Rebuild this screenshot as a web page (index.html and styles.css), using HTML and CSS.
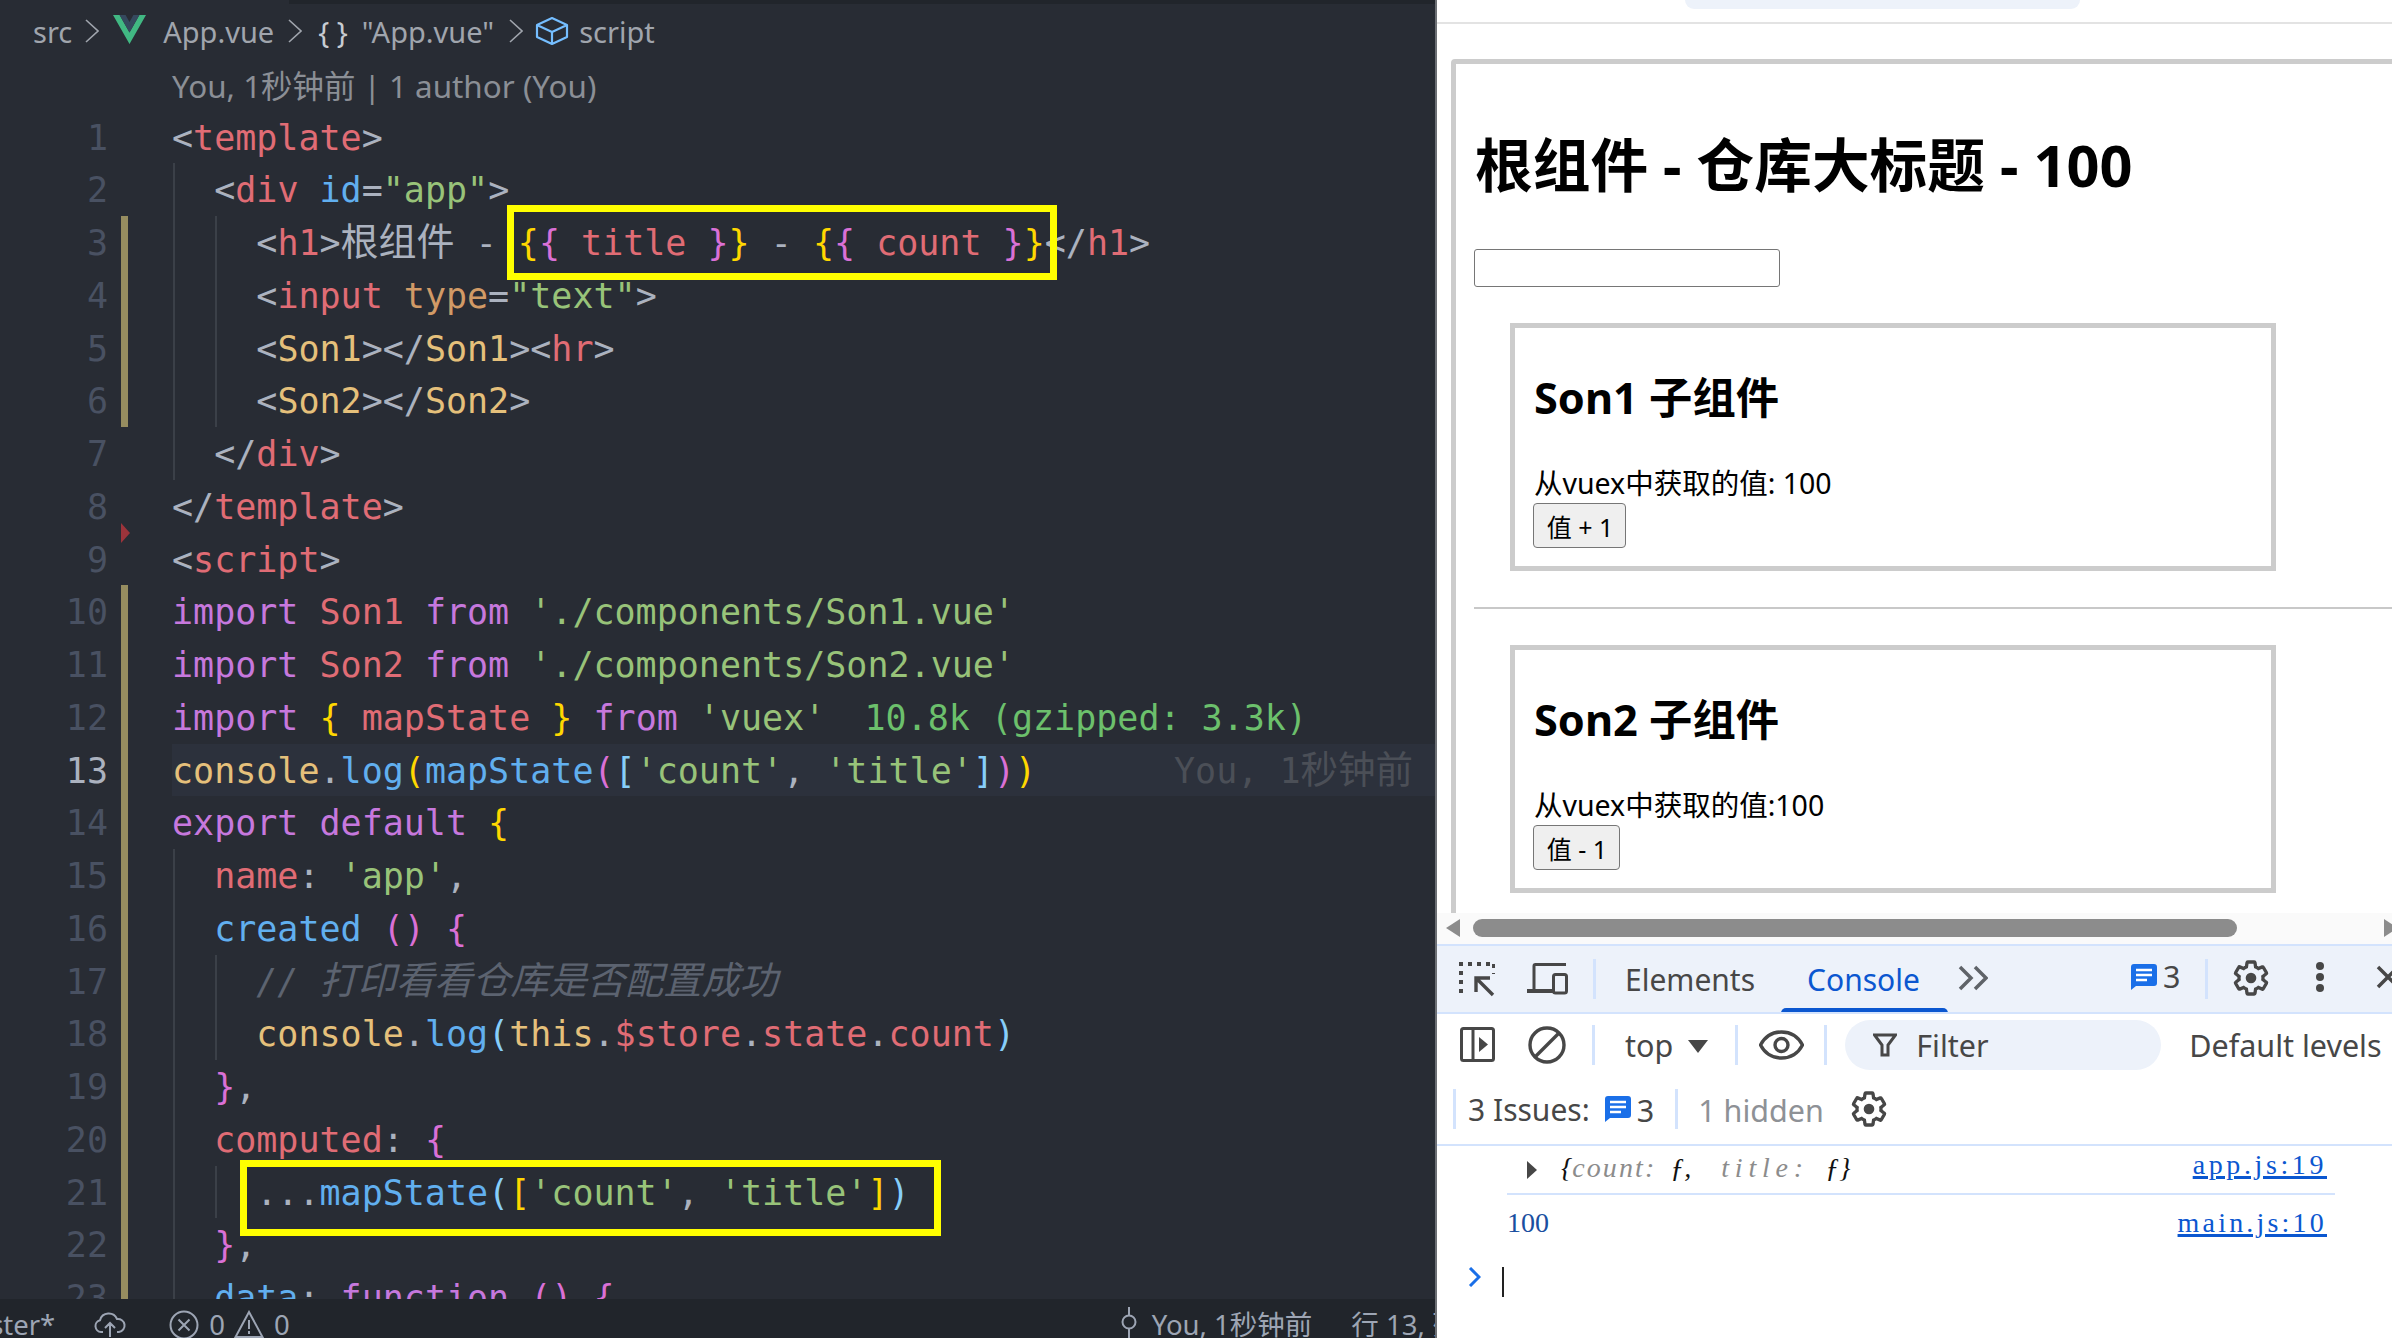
FILE: index.html
```html
<!DOCTYPE html>
<html lang="zh">
<head>
<meta charset="utf-8">
<title>App.vue</title>
<link rel="stylesheet" href="styles.css">
</head>
<body>
<svg class="defs" width="0" height="0" aria-hidden="true">
  <symbol id="gear" viewBox="0 0 24 24"><path fill="none" stroke="currentColor" stroke-width="2" d="M19.14 12.94c.04-.3.06-.61.06-.94 0-.32-.02-.64-.07-.94l2.03-1.58c.18-.14.23-.41.12-.61l-1.92-3.32c-.12-.22-.37-.29-.59-.22l-2.39.96c-.5-.38-1.03-.7-1.62-.94l-.36-2.54c-.04-.24-.24-.41-.48-.41h-3.84c-.24 0-.43.17-.47.41l-.36 2.54c-.59.24-1.13.57-1.62.94l-2.39-.96c-.22-.08-.47 0-.59.22L2.74 8.87c-.12.21-.08.47.12.61l2.03 1.58c-.05.3-.09.63-.09.94s.02.64.07.94l-2.03 1.58c-.18.14-.23.41-.12.61l1.92 3.32c.12.22.37.29.59.22l2.39-.96c.5.38 1.03.7 1.62.94l.36 2.54c.05.24.24.41.48.41h3.84c.24 0 .44-.17.47-.41l.36-2.54c.59-.24 1.13-.56 1.62-.94l2.39.96c.22.08.47 0 .59-.22l1.92-3.32c.12-.22.07-.47-.12-.61l-2.01-1.58z"/><circle cx="12" cy="12" r="3.2" fill="currentColor"/></symbol>
  <symbol id="chat" viewBox="0 0 26 26"><path fill="#1a6fe8" d="M3 0h20a3 3 0 0 1 3 3v16a3 3 0 0 1-3 3H5l-5 4V3a3 3 0 0 1 3-3z"/><path stroke="#fff" stroke-width="2.4" d="M5 6h16M5 11h16M5 16h11"/></symbol>
</svg>
<div class="app">
  <section class="editor">
    <div class="tab-edge"></div>
    <nav class="crumbs">
      <span class="c-src">src</span>
      <svg class="chev" width="14" height="28" viewBox="0 0 14 28"><path d="M1 3l12 11L1 25" fill="none" stroke="currentColor" stroke-width="1.6"/></svg>
      <svg class="vue" width="33" height="29" viewBox="0 0 33 29"><path fill="#41b883" d="M0 0h6.6l9.9 17.5L26.400 0H33L16.500 29z"/><path fill="#35495e" d="M6.600 0h6l3.900 7 3.900-7h6l-9.900 17.500z"/></svg>
      <span class="c-file">App.vue</span>
      <svg class="chev" width="14" height="28" viewBox="0 0 14 28"><path d="M1 3l12 11L1 25" fill="none" stroke="currentColor" stroke-width="1.6"/></svg>
      <span class="c-obj">{ }</span>
      <span class="c-quoted">"App.vue"</span>
      <svg class="chev" width="14" height="28" viewBox="0 0 14 28"><path d="M1 3l12 11L1 25" fill="none" stroke="currentColor" stroke-width="1.6"/></svg>
      <svg class="cube" width="34" height="30" viewBox="0 0 34 30"><path d="M17 2L32 9v12L17 28 2 21V9zM2 9l15 7 15-7M17 16v12" fill="none" stroke="#75beff" stroke-width="2.2" stroke-linejoin="round"/></svg>
      <span class="c-script">script</span>
    </nav>
    <div class="lens">You, 1秒钟前 | 1 author (You)</div>
    <div class="code">
      <div class="line"><span class="ln">1</span><span class="mark"></span><span class="txt"><span class="pn">&lt;</span><span class="tg">template</span><span class="pn">&gt;</span></span></div>
      <div class="line"><span class="ln">2</span><span class="mark"></span><span class="txt g1">  <span class="pn">&lt;</span><span class="tg">div</span> <span class="fn">id</span><span class="pn">=</span><span class="st">"app"</span><span class="pn">&gt;</span></span></div>
      <div class="line"><span class="ln">3</span><span class="mark mod"></span><span class="txt g1 g2">    <span class="pn">&lt;</span><span class="tg">h1</span><span class="pn">&gt;<span class="cjk">根组件</span> - </span><span class="y">{</span><span class="p">{</span> <span class="tg">title</span> <span class="p">}</span><span class="y">}</span><span class="pn"> - </span><span class="y">{</span><span class="p">{</span> <span class="tg">count</span> <span class="p">}</span><span class="y">}</span><span class="pn">&lt;/</span><span class="tg">h1</span><span class="pn">&gt;</span></span></div>
      <div class="line"><span class="ln">4</span><span class="mark mod"></span><span class="txt g1 g2">    <span class="pn">&lt;</span><span class="tg">input</span> <span class="at">type</span><span class="pn">=</span><span class="st">"text"</span><span class="pn">&gt;</span></span></div>
      <div class="line"><span class="ln">5</span><span class="mark mod"></span><span class="txt g1 g2">    <span class="pn">&lt;</span><span class="cp">Son1</span><span class="pn">&gt;&lt;/</span><span class="cp">Son1</span><span class="pn">&gt;&lt;</span><span class="tg">hr</span><span class="pn">&gt;</span></span></div>
      <div class="line"><span class="ln">6</span><span class="mark mod"></span><span class="txt g1 g2">    <span class="pn">&lt;</span><span class="cp">Son2</span><span class="pn">&gt;&lt;/</span><span class="cp">Son2</span><span class="pn">&gt;</span></span></div>
      <div class="line"><span class="ln">7</span><span class="mark"></span><span class="txt g1">  <span class="pn">&lt;/</span><span class="tg">div</span><span class="pn">&gt;</span></span></div>
      <div class="line"><span class="ln">8</span><span class="mark"></span><span class="txt"><span class="pn">&lt;/</span><span class="tg">template</span><span class="pn">&gt;</span></span></div>
      <div class="line"><span class="ln">9</span><span class="mark"><i class="del"></i></span><span class="txt"><span class="pn">&lt;</span><span class="tg">script</span><span class="pn">&gt;</span></span></div>
      <div class="line"><span class="ln">10</span><span class="mark mod"></span><span class="txt"><span class="kw">import</span> <span class="tg">Son1</span> <span class="kw">from</span> <span class="st">'./components/Son1.vue'</span></span></div>
      <div class="line"><span class="ln">11</span><span class="mark mod"></span><span class="txt"><span class="kw">import</span> <span class="tg">Son2</span> <span class="kw">from</span> <span class="st">'./components/Son2.vue'</span></span></div>
      <div class="line"><span class="ln">12</span><span class="mark mod"></span><span class="txt"><span class="kw">import</span> <span class="y">{</span> <span class="tg">mapState</span> <span class="y">}</span> <span class="kw">from</span> <span class="st">'vuex'</span>  <span class="sz">10.8k (gzipped: 3.3k)</span></span></div>
      <div class="line"><span class="ln cur">13</span><span class="mark mod"></span><span class="txt hl"><span class="cp">console</span><span class="pn">.</span><span class="fn">log</span><span class="y">(</span><span class="fn">mapState</span><span class="p">(</span><span class="l">[</span><span class="st">'count'</span><span class="pn">, </span><span class="st">'title'</span><span class="l">]</span><span class="p">)</span><span class="y">)</span><span class="gh">You, 1<span class="cjk-g">秒钟前</span></span></span></div>
      <div class="line"><span class="ln">14</span><span class="mark mod"></span><span class="txt"><span class="kw">export</span> <span class="kw">default</span> <span class="y">{</span></span></div>
      <div class="line"><span class="ln">15</span><span class="mark mod"></span><span class="txt g1">  <span class="tg">name</span><span class="pn">: </span><span class="st">'app'</span><span class="pn">,</span></span></div>
      <div class="line"><span class="ln">16</span><span class="mark mod"></span><span class="txt g1">  <span class="fn">created</span> <span class="p">()</span> <span class="p">{</span></span></div>
      <div class="line"><span class="ln">17</span><span class="mark mod"></span><span class="txt g1 g2">    <span class="cm">// <span class="cjk-c">打印看看仓库是否配置成功</span></span></span></div>
      <div class="line"><span class="ln">18</span><span class="mark mod"></span><span class="txt g1 g2">    <span class="cp">console</span><span class="pn">.</span><span class="fn">log</span><span class="l">(</span><span class="cp">this</span><span class="pn">.</span><span class="tg">$store</span><span class="pn">.</span><span class="tg">state</span><span class="pn">.</span><span class="tg">count</span><span class="l">)</span></span></div>
      <div class="line"><span class="ln">19</span><span class="mark mod"></span><span class="txt g1">  <span class="p">}</span><span class="pn">,</span></span></div>
      <div class="line"><span class="ln">20</span><span class="mark mod"></span><span class="txt g1">  <span class="tg">computed</span><span class="pn">: </span><span class="p">{</span></span></div>
      <div class="line"><span class="ln">21</span><span class="mark mod"></span><span class="txt g1 g2">    <span class="pn">...</span><span class="fn">mapState</span><span class="l">(</span><span class="y">[</span><span class="st">'count'</span><span class="pn">, </span><span class="st">'title'</span><span class="y">]</span><span class="l">)</span></span></div>
      <div class="line"><span class="ln">22</span><span class="mark mod"></span><span class="txt g1">  <span class="p">}</span><span class="pn">,</span></span></div>
      <div class="line"><span class="ln">23</span><span class="mark mod"></span><span class="txt g1">  <span class="fn">data</span><span class="pn">: </span><span class="kw">function</span> <span class="p">()</span> <span class="p">{</span></span></div>
    </div>
    <footer class="status">
      <span class="s-branch">master*</span>
      <svg class="s-cloud" width="32" height="26" viewBox="0 0 32 26"><path d="M9 20H7a6 6 0 0 1-1-11.800A9 9 0 0 1 23 7a6.500 6.500 0 0 1 2 13h-2M16 25V12M11 16l5-5 5 5" fill="none" stroke="currentColor" stroke-width="2"/></svg>
      <svg class="s-err" width="30" height="30" viewBox="0 0 30 30"><circle cx="15" cy="15" r="13.500" fill="none" stroke="currentColor" stroke-width="2"/><path d="M9.500 9.500l11 11M20.500 9.500l-11 11" stroke="currentColor" stroke-width="2"/></svg>
      <span class="s-num">0</span>
      <svg class="s-warn" width="30" height="28" viewBox="0 0 30 28"><path d="M15 2L28.500 27h-27zM15 10v9M15 21v3" fill="none" stroke="currentColor" stroke-width="2"/></svg>
      <span class="s-num">0</span>
      <svg class="s-commit" width="18" height="34" viewBox="0 0 18 34"><circle cx="9" cy="15" r="6.500" fill="none" stroke="currentColor" stroke-width="2"/><path d="M9 0v8M9 22v12" stroke="currentColor" stroke-width="2"/></svg>
      <span class="s-blame">You, 1秒钟前</span>
      <span class="s-pos">行 13, 列 1</span>
    </footer>
    <div class="hilite hilite-a"></div>
    <div class="hilite hilite-b"></div>
  </section>

  <section class="browser">
    <div class="viewport">
      <div class="address"><div class="address-pill"></div></div>
      <div class="root-box">
        <h1 class="root-title">根组件 - 仓库大标题 - 100</h1>
        <input class="root-input" type="text">
        <div class="son">
          <h3 class="son-title">Son1 子组件</h3>
          <div class="son-text">从vuex中获取的值: 100</div>
          <button class="son-btn son-btn-add">值 + 1</button>
        </div>
        <hr class="root-rule">
        <div class="son">
          <h3 class="son-title">Son2 子组件</h3>
          <div class="son-text">从vuex中获取的值:100</div>
          <button class="son-btn son-btn-sub">值 - 1</button>
        </div>
      </div>
    </div>
    <div class="hscroll">
      <i class="arrow-l"></i>
      <i class="thumb"></i>
      <i class="arrow-r"></i>
    </div>
    <div class="devtools">
      <div class="dt-tabs">
        <svg class="ic-inspect" width="36" height="36" viewBox="0 0 36 36"><path d="M2 32V3h33M35 3v10" fill="none" stroke="#474747" stroke-width="4" stroke-dasharray="4 5"/><path d="M17 31V17h14M17 17l17 17" fill="none" stroke="#474747" stroke-width="3.400"/></svg>
        <svg class="ic-device" width="41" height="32" viewBox="0 0 41 32"><path d="M7 28V3a1.500 1.500 0 0 1 1.500-1.500H39" fill="none" stroke="#474747" stroke-width="3"/><path d="M0 26h26v4H0z" fill="#474747"/><rect x="26.500" y="11.500" width="13" height="18.500" rx="2" fill="#edf2fa" stroke="#474747" stroke-width="3"/></svg>
        <i class="dt-sep sep-a"></i>
        <span class="tab tab-el">Elements</span>
        <span class="tab tab-con">Console</span>
        <svg class="ic-more" width="30" height="26" viewBox="0 0 30 26"><path d="M2 2l11 11L2 24M17 2l11 11-11 11" fill="none" stroke="#5f6368" stroke-width="3.500"/></svg>
        <svg class="ic-chat" width="26" height="26"><use href="#chat"/></svg>
        <span class="count">3</span>
        <i class="dt-sep sep-b"></i>
        <svg class="ic-gear" width="40" height="40"><use href="#gear"/></svg>
        <svg class="ic-dots" width="8" height="30" viewBox="0 0 8 30"><circle cx="4" cy="4" r="4" fill="#474747"/><circle cx="4" cy="15" r="4" fill="#474747"/><circle cx="4" cy="26" r="4" fill="#474747"/></svg>
        <svg class="ic-close" width="24" height="24" viewBox="0 0 24 24"><path d="M2 2l20 20M22 2L2 22" stroke="#474747" stroke-width="3.500"/></svg>
      </div>
      <div class="dt-bar">
        <svg class="ic-side" width="35" height="35" viewBox="0 0 35 35"><rect x="1.500" y="1.500" width="32" height="32" rx="2" fill="none" stroke="#474747" stroke-width="3"/><path d="M13 2v31" stroke="#474747" stroke-width="3"/><path d="M19 10l9 7.500-9 7.500z" fill="#474747"/></svg>
        <svg class="ic-block" width="38" height="38" viewBox="0 0 38 38"><circle cx="19" cy="19" r="17" fill="none" stroke="#474747" stroke-width="3.400"/><path d="M7 31L31 7" stroke="#474747" stroke-width="3.400"/></svg>
        <i class="dt-sep sep-c"></i>
        <span class="bar-text top-text">top</span>
        <i class="tri-down"></i>
        <i class="dt-sep sep-d"></i>
        <svg class="ic-eye" width="45" height="30" viewBox="0 0 45 30"><path d="M1.500 15C6 6.500 14 2 22.500 2S39 6.500 43.500 15C39 23.500 31 28 22.500 28S6 23.500 1.500 15z" fill="none" stroke="#474747" stroke-width="3.400"/><circle cx="22.500" cy="15" r="6.500" fill="none" stroke="#474747" stroke-width="3.400"/></svg>
        <i class="dt-sep sep-e"></i>
        <div class="filter">
          <svg class="ic-funnel" width="24" height="24" viewBox="0 0 24 24"><path d="M1.500 2h21L15 12v10H9V12z" fill="none" stroke="#474747" stroke-width="3"/></svg>
          <span class="bar-text">Filter</span>
        </div>
        <span class="bar-text levels">Default levels</span>
      </div>
      <div class="dt-issues">
        <i class="dt-sep sep-f"></i>
        <span class="bar-text issues-text">3 Issues:</span>
        <svg class="ic-chat-2" width="26" height="26"><use href="#chat"/></svg>
        <span class="count">3</span>
        <i class="dt-sep sep-g"></i>
        <span class="hidden-text">1 hidden</span>
        <svg class="ic-gear-2" width="40" height="40"><use href="#gear"/></svg>
      </div>
      <div class="log log-obj">
        <i class="tri-right"></i>
        <span class="obj">{<span class="k k-count">count</span><span class="k k-colon">:</span> ƒ, <span class="k k-title">title</span><span class="k k-colon">:</span> ƒ}</span>
        <a class="src-link link-app">app.js:19</a>
      </div>
      <div class="log log-num">
        <span class="num">100</span>
        <a class="src-link link-main">main.js:10</a>
      </div>
      <div class="prompt">
        <svg class="ic-prompt" width="13" height="20" viewBox="0 0 13 20"><path d="M2 1l9 9-9 9" fill="none" stroke="#1a6fe8" stroke-width="3"/></svg>
        <i class="caret"></i>
      </div>
    </div>
  </section>
</div>
</body>
</html>
```
FILE: styles.css
```css
* { box-sizing: border-box; }
html, body { margin: 0; height: 100%; overflow: hidden; background: #fff; }
.defs { position: absolute; }
i { display: block; flex: none; }
svg { display: block; flex: none; }

.app { display: flex; width: 2392px; height: 1338px; overflow: hidden; }

/* Editor */
.editor {
  position: relative;
  width: 1437px;
  flex: none;
  display: flex;
  flex-direction: column;
  background: #282c34;
  border-right: 2px solid #6d7075;
  overflow: hidden;
  font-family: "Noto Sans", "Noto Sans CJK SC", sans-serif;
}
.tab-edge { height: 4px; margin-left: 289px; background: #21252b; flex: none; }
.crumbs {
  display: flex;
  align-items: center;
  height: 54px;
  flex: none;
  padding-left: 33px;
  font-size: 29px;
  color: #a0a5ad;
}
.chev { color: #a0a5ad; }
.c-src + .chev { margin-left: 13px; }
.vue { margin-left: 14px; margin-top: -3px; }
.c-file { margin-left: 17px; margin-right: 14px; }
.c-obj { margin-left: 16px; white-space: pre; color: #c8ccd2; }
.c-quoted { margin-left: 14px; margin-right: 15px; }
.cube { margin-left: 12px; }
.c-script { margin-left: 10px; }

.lens {
  height: 52.5px;
  flex: none;
  padding-left: 172px;
  line-height: 56px;
  font-size: 31.400px;
  color: #8b8f96;
  white-space: pre;
}

.code {
  flex: 1;
  min-height: 0;
  overflow: hidden;
  font-family: "DejaVu Sans Mono", "Noto Sans CJK SC", monospace;
  font-size: 35px;
  color: #abb2bf;
}
.line { display: flex; height: 52.75px; line-height: 55px; }
.ln { width: 108px; flex: none; text-align: right; color: #495162; }
.ln.cur { color: #abb2bf; }
.mark { position: relative; width: 7px; flex: none; margin-left: 13px; }
.mark.mod { background: #968d60; }
.del {
  position: absolute;
  left: 0;
  top: -10px;
  border-left: 9px solid #9c343b;
  border-top: 10px solid transparent;
  border-bottom: 10px solid transparent;
}
.txt {
  flex: 1;
  min-width: 0;
  margin-left: 44px;
  white-space: pre;
  overflow: visible;
}
.txt.g1 { background: linear-gradient(#3b4048, #3b4048) 1px 0 / 2px 100% no-repeat; }
.txt.g1.g2 {
  background:
    linear-gradient(#3b4048, #3b4048) 1px 0 / 2px 100% no-repeat,
    linear-gradient(#3b4048, #3b4048) 43px 0 / 2px 100% no-repeat;
}
.txt.hl { background: #2c313c; }
.cjk { font-size: 38px; line-height: 1; }
.cjk-g { font-size: 37.500px; line-height: 1; }
.cjk-c { font-size: 38.200px; line-height: 1; }
.tg { color: #e06c75; }
.pn { color: #abb2bf; }
.st { color: #98c379; }
.at { color: #d19a66; }
.kw { color: #c678dd; }
.fn { color: #61afef; }
.cp { color: #e5c07b; }
.y { color: #ffd700; }
.p { color: #da70d6; }
.l { color: #87cefa; }
.sz { color: #6cc06c; margin-left: -3px; }
.cm { color: #5c6370; font-style: italic; }
.gh { color: #4b4f57; margin-left: 138px; }

.status {
  height: 39px;
  flex: none;
  display: flex;
  align-items: flex-start;
  background: #21252b;
  color: #9da5b4;
  font-size: 27.500px;
  line-height: 36px;
  white-space: nowrap;
  overflow: hidden;
  padding-top: 8px;
}
.s-branch { margin-left: -51px; }
.s-cloud { margin-left: 39px; margin-top: 5px; }
.s-err { margin-left: 43px; margin-top: 3px; }
.s-num { margin-left: 10px; }
.s-warn { margin-left: 9px; margin-top: 3px; }
.s-commit { margin-left: 830px; }
.s-blame { margin-left: 14px; }
.s-pos { margin-left: 39px; }

.hilite { position: absolute; border: 7px solid #ffff00; }
.hilite-a { left: 507px; top: 205px; width: 550px; height: 75px; }
.hilite-b { left: 240px; top: 1160px; width: 701px; height: 76px; }

/* Browser */
.browser {
  flex: 1;
  min-width: 0;
  display: flex;
  flex-direction: column;
  font-family: "Noto Sans", "Noto Sans CJK SC", sans-serif;
  color: #474747;
}
.viewport { height: 913px; flex: none; overflow: hidden; background: #fff; }
.address { height: 24px; border-bottom: 2px solid #e3e3e3; padding-left: 248px; }
.address-pill { width: 395px; height: 9px; background: #edf2fa; border-radius: 0 0 14px 14px; }
.root-box {
  width: 1200px;
  margin: 35px 0 0 14px;
  border: 5px solid #ccc;
  border-radius: 4px;
  padding: 0 0 40px 18px;
  color: #000;
}
.root-title { margin: 61px 0 0 1px; font-size: 57.700px; line-height: 80px; font-weight: 700; }
.root-input {
  display: block;
  width: 306px;
  height: 38px;
  margin-top: 44px;
  border: 1.5px solid #767676;
  border-radius: 3px;
  background: #fff;
}
.son {
  width: 766px;
  margin: 36px 0 0 36px;
  border: 5px solid #ccc;
  padding: 40px 0 18px 18px;
}
.son-title { margin: 0 0 0 1px; font-size: 43.300px; line-height: 60px; font-weight: 700; }
.son-text { margin: 36px 0 0 1px; font-size: 28.500px; line-height: 39px; }
.son-btn {
  display: block;
  height: 45px;
  padding: 0 0 0 1px;
  border: 1.5px solid #767676;
  border-radius: 4px;
  background: #efefef;
  color: #000;
  font-family: "Noto Sans", "Noto Sans CJK SC", sans-serif;
  font-size: 25px;
}
.son-btn-add { width: 93px; }
.son-btn-sub { width: 87px; }
.root-rule { height: 2px; margin: 36px 0 0; border: 0; background: #c8c8c8; }

.hscroll {
  height: 31px;
  flex: none;
  display: flex;
  align-items: flex-start;
  padding-top: 6px;
  background: #fafafa;
}
.arrow-l {
  margin: 0 0 0 9px;
  border-right: 14px solid #8c8c8c;
  border-top: 9px solid transparent;
  border-bottom: 9px solid transparent;
}
.thumb { width: 764px; height: 18px; margin-left: 13px; background: #8c8c8c; border-radius: 9px; }
.arrow-r {
  margin-left: 147px;
  border-left: 14px solid #8c8c8c;
  border-top: 9px solid transparent;
  border-bottom: 9px solid transparent;
}

.devtools { flex: 1; min-height: 0; background: #fff; overflow: hidden; font-size: 30.500px; }
.dt-tabs {
  height: 70px;
  display: flex;
  align-items: center;
  background: #edf2fa;
  border-top: 2px solid #d3e3fd;
  border-bottom: 2px solid #d3e3fd;
  overflow: hidden;
}
.dt-sep { width: 3px; height: 40px; background: #d3e3fd; }
.ic-inspect { margin-left: 22px; }
.ic-device { margin-left: 32px; }
.sep-a { margin-left: 25px; }
.tab { line-height: 66px; padding-top: 2px; font-size: 30px; }
.tab-el { margin-left: 29px; }
.tab-con {
  position: relative;
  margin-left: 52px;
  color: #0b57d0;
}
.tab-con::after {
  content: "";
  position: absolute;
  left: -26px;
  right: -28px;
  bottom: 0;
  height: 5px;
  background: #0b57d0;
  border-radius: 5px 5px 0 0;
}
.ic-more { margin-left: 38px; margin-top: -3px; }
.ic-chat { margin-left: 143px; margin-top: -4px; }
.count { margin-left: 6px; line-height: 1; }
.dt-tabs .count { margin-top: -6px; }
.sep-b { margin-left: 25px; }
.ic-gear { margin-left: 23px; margin-top: -2px; color: #474747; }
.ic-dots { margin-left: 45px; margin-top: -4px; }
.ic-close { margin-left: 52px; margin-top: -4px; }

.dt-bar { height: 59px; display: flex; align-items: center; padding-top: 2px; }
.bar-text { line-height: 1; white-space: nowrap; padding-top: 2px; }
.ic-side { margin-left: 23px; }
.ic-block { margin-left: 33px; }
.sep-c { margin-left: 26px; }
.top-text { margin-left: 30px; }
.tri-down {
  margin-left: 15px;
  margin-top: 4px;
  border-top: 13px solid #474747;
  border-left: 10px solid transparent;
  border-right: 10px solid transparent;
}
.sep-d { margin-left: 27px; }
.ic-eye { margin-left: 21px; }
.sep-e { margin-left: 20px; }
.filter {
  display: flex;
  align-items: center;
  width: 316px;
  height: 50px;
  margin-left: 18px;
  padding-left: 28px;
  border-radius: 25px;
  background: #edf2fa;
}
.ic-funnel { margin-right: 19px; }
.levels { margin-left: 28px; }

.dt-issues {
  height: 73px;
  display: flex;
  align-items: center;
  border-bottom: 2px solid #d3e3fd;
}
.sep-f { margin-left: 16px; }
.issues-text { margin-left: 12px; padding-top: 3px; font-size: 30px; }
.ic-chat-2 { margin-left: 15px; }
.dt-issues .count { padding-top: 3px; }
.sep-g { margin-left: 21px; }
.hidden-text { margin-left: 20px; color: #8e9196; line-height: 1; padding-top: 3px; }
.ic-gear-2 { margin-left: 25px; color: #474747; }

.log {
  display: flex;
  align-items: center;
  font-family: "Liberation Serif", serif;
  font-size: 28px;
}
.log-obj { height: 49px; margin: 0 57px 0 70px; border-bottom: 2px solid #d3e3fd; }
.log-num { height: 54px; margin: 0 65px 0 70px; padding-top: 2px; }
.tri-right {
  margin-left: 20px;
  border-left: 10px solid #474747;
  border-top: 9px solid transparent;
  border-bottom: 9px solid transparent;
}
.obj { margin: -3px 0 0 24px; font-style: italic; color: #111; white-space: pre; word-spacing: 3px; }
.k { color: #8c8c8c; }
.k-count { letter-spacing: 2.100px; }
.k-title { letter-spacing: 5.800px; margin-left: 20px; }
.k-colon { margin-right: 6px; }
.k-title + .k-colon { margin-right: 12px; }
.src-link { margin-left: auto; color: #0b57d0; text-decoration: underline; text-decoration-thickness: 3px; }
.link-app { letter-spacing: 3.600px; margin-right: 8px; margin-top: -10px; }
.link-main { letter-spacing: 3.200px; }
.num { color: #1a4fa0; }
.prompt { display: flex; align-items: flex-start; height: 60px; padding: 18px 0 0 31px; }
.caret { width: 2px; height: 30px; margin-left: 21px; background: #222; }
```
